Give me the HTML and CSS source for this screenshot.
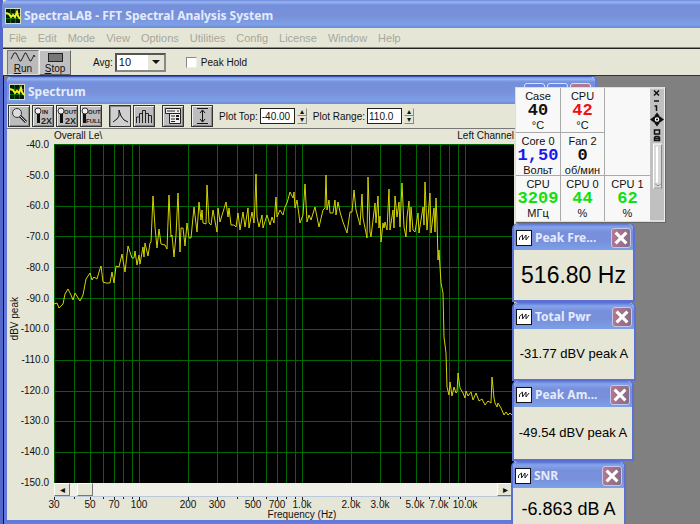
FILE: index.html
```html
<!DOCTYPE html>
<html lang="en">
<head>
<meta charset="utf-8">
<title>SpectraLAB - FFT Spectral Analysis System</title>
<link rel="stylesheet" href="styles.css">
</head>
<body>
<svg class="defs" aria-hidden="true">
  <symbol id="app" viewBox="0 0 16 16"><rect width="16" height="16" fill="#d8d8c8"/><rect x="1" y="1" width="14" height="14" fill="#021c06"/><path d="M5.5 1v14M10.5 1v14M1 5.5h14M1 10.5h14" stroke="#0a6a18"/><path d="M1 5l3 1 2 3 2-2 2 2 2-5 1 4 2 3" fill="none" stroke="#f0f020" stroke-width="2"/></symbol>
  <symbol id="wave" viewBox="0 0 16 16"><rect x=".5" y=".5" width="15" height="15" fill="#fff" stroke="#111"/><path d="M3.500 10V7.500L6.500 5v5l3.500-5v5l3-4" fill="none" stroke="#222"/></symbol>
  <symbol id="cross" viewBox="0 0 20 20"><path d="M4 4l12 12M16 4L4 16" stroke="#fff" stroke-width="3.4"/></symbol>
</svg>
<div class="app">
  <header class="titlebar main-title"><svg class="icon"><use href="#app"/></svg><h1>SpectraLAB - FFT Spectral Analysis System</h1></header>
  <nav class="menu">
    <button>File</button><button>Edit</button><button>Mode</button><button>View</button><button>Options</button><button>Utilities</button><button>Config</button><button>License</button><button>Window</button><button>Help</button>
  </nav>
  <div class="runbar">
    <button class="big pressed"><svg width="26" height="12" viewBox="0 0 26 12"><path d="M1 8l3-6h2l4 8h1l4-8h1l4 8h1l3-6 1 2" fill="none" stroke="#222"/></svg><span><u>R</u>un</span></button>
    <button class="big"><svg width="26" height="12" viewBox="0 0 26 12"><rect x="6.500" y="2.500" width="14" height="8" fill="#777" stroke="#222"/></svg><span><u>S</u>top</span></button>
    <label class="avg" for="avg">Avg:</label>
    <span class="combo"><select id="avg"><option>10</option></select><i></i></span>
    <label class="hold"><input type="checkbox">Peak Hold</label>
  </div>
  <main class="desktop">
    <section class="spectrum">
      <header class="titlebar sub-title"><svg class="icon"><use href="#app"/></svg><h2>Spectrum</h2>
        <span class="caption"><button aria-label="Minimize"></button><button aria-label="Maximize"></button><button class="red" aria-label="Close"></button></span></header>
      <div class="tools">
        <button aria-label="Zoom"><svg viewBox="0 0 20 20"><circle cx="8" cy="7" r="4.500" fill="#ddd" stroke="#333"/><path d="M11 10l6 6" stroke="#222" stroke-width="3"/><path d="M11 10l6 6" stroke="#ccc"/></svg></button>
        <button aria-label="Zoom in 2X"><svg viewBox="0 0 20 20"><circle cx="5" cy="5" r="3" fill="#eee" stroke="#333"/><path d="M5.500 8v9" stroke="#111" stroke-width="3"/><text x="9" y="8">IN</text><text class="x2" x="8" y="18">2X</text></svg></button>
        <button aria-label="Zoom out 2X"><svg viewBox="0 0 20 20"><circle cx="4" cy="5" r="3" fill="#eee" stroke="#333"/><path d="M4.500 8v9" stroke="#111" stroke-width="3"/><text x="7" y="8">OUT</text><text class="x2" x="8" y="18">2X</text></svg></button>
        <button aria-label="Zoom out full"><svg viewBox="0 0 20 20"><circle cx="4" cy="5" r="3" fill="#eee" stroke="#333"/><path d="M3.500 8v9" stroke="#111" stroke-width="3"/><text x="7" y="8">OUT</text><text x="5" y="17">FULL</text></svg></button>
        <button class="pressed gap" aria-label="Line plot"><svg viewBox="0 0 20 20"><path d="M3 16l4-3 2-3V4l2 6 3 4 4 2" fill="none" stroke="#111"/></svg></button>
        <button aria-label="Bar plot"><svg viewBox="0 0 20 20"><path d="M2.500 17v-6h3v6V7.500h3V17V4.500h3V17V7.500h3V17V9.500h3V17" fill="none" stroke="#222"/></svg></button>
        <button class="gap" aria-label="Options"><svg viewBox="0 0 20 20"><path d="M2.500 2.500h15v5h-15zM6.500 7.500h11v10h-11z" fill="#eee" stroke="#222"/><path d="M4 5h8M14 5h2M8 10h4M8 13h4M8 15.500h4" stroke="#222"/><path d="M13 10h3M13 13h3" stroke="#222" stroke-width="2"/></svg></button>
        <button class="gap" aria-label="Scale"><svg viewBox="0 0 20 20"><path d="M5 2.500h11M5 17.500h11M10.500 4v12M8 7l2.500-3L13 7M8 13l2.500 3 2.500-3" fill="none" stroke="#111"/></svg></button>
        <label for="top">Plot Top:</label><input id="top" value="-40.00">
        <span class="spin"><button aria-label="Top up">▴</button><button aria-label="Top down">▾</button></span>
        <label for="range">Plot Range:</label><input id="range" value="110.0">
        <span class="spin"><button aria-label="Range up">▴</button><button aria-label="Range down">▾</button></span>
      </div>
      <div class="chart">
        <div class="legend"><span>Overall Le\</span><span>Left Channel</span></div>
        <div class="unit">dBV peak</div>
        <div class="yaxis"><span>-40.0</span><span>-50.0</span><span>-60.0</span><span>-70.0</span><span>-80.0</span><span>-90.0</span><span>-100.0</span><span>-110.0</span><span>-120.0</span><span>-130.0</span><span>-140.0</span><span>-150.0</span></div>
        <svg class="plot" viewBox="0 0 460 339">
          <rect width="460" height="339"/>
          <path class="grid" d="M.5 0v339M20.500 0v339M36.500 0v339M49.500 0v339M60.500 0v339M69.500 0v339M78.500 0v339M85.500 0v339M134.500 0v339M163.500 0v339M183.500 0v339M199.500 0v339M212.500 0v339M223.500 0v339M232.500 0v339M241.500 0v339M248.500 0v339M297.500 0v339M326.500 0v339M346.500 0v339M362.500 0v339M375.500 0v339M386.500 0v339M395.500 0v339M404.500 0v339M411.500 0v339M0 .5h460M0 31.500h460M0 62.500h460M0 92.500h460M0 123.500h460M0 154.500h460M0 185.500h460M0 216.500h460M0 247.500h460M0 277.500h460M0 308.500h460"/>
          <polyline points="0,160 3,159 5,164 9,160 11,150 14,145 17,151 19,156 21,149 26,157 29,151 32,135 36,129 38,136 40,133 43,135 45,128 47,122 49,138 52,139 56,139 58,128 60,139 62,122 65,123 68,110 71,128 74,102 78,114 80,114 81,107 83,121 85,111 86,120 89,103 90,113 91,99 94,112 96,99 97,98 99,52 101,83 103,104 105,85 107,100 111,101 113,105 115,51 117,93 118,91 120,113 122,91 124,49 126,108 127,84 129,84 131,102 133,79 135,94 137,94 140,63 143,88 145,58 147,76 148,66 149,79 152,80 153,41 155,79 157,81 159,66 163,88 164,64 166,78 169,68 172,58 174,73 175,64 177,81 180,81 182,83 184,69 186,86 189,68 191,83 194,64 195,84 198,68 200,79 201,59 202,30 203,73 205,83 208,71 209,84 213,71 216,81 218,73 220,79 222,53 223,73 226,66 229,71 231,63 233,59 236,48 239,54 240,48 241,64 243,56 246,79 249,71 251,40 253,78 255,71 257,76 261,63 263,73 265,83 269,66 271,64 272,31 273,66 275,56 276,69 279,69 281,56 282,71 284,58 286,68 289,78 293,89 296,68 298,68 300,46 302,66 306,81 308,50 309,74 313,94 314,33 316,88 317,93 321,59 322,79 324,52 325,84 326,72 327,98 329,79 330,84 331,78 333,86 335,45 336,86 339,66 340,84 341,52 343,73 345,58 346,83 348,39 350,83 352,93 353,73 355,57 356,88 357,63 359,86 361,88 364,69 365,89 369,63 370,81 371,38 373,86 374,73 376,49 377,89 380,64 381,88 382,54 383,76 384,116 385,106 387,139 389,149 390,193 392,209 393,243 395,251 396,238 398,252 400,243 402,249 403,248 404,229 406,244 409,249 411,254 412,247 414,252 417,248 419,256 422,249 425,257 428,255 431,261 434,257 437,259 438,233 440,254 441,259 443,263 444,259 447,264 450,271 452,268 454,271 456,269 458,271 460,271"/>
        </svg>
        <div class="scroll"><button aria-label="Scroll left">◂</button><button class="thumb" aria-label="Position"></button><button class="end" aria-label="Scroll right">▸</button></div>
        <svg class="xaxis" viewBox="0 0 476 23">
          <path d="M8.500 0v3M28.500 0v2M44.500 0v3M57.500 0v2M68.500 0v3M77.500 0v2M86.500 0v2M93.500 0v3M142.500 0v3M171.500 0v3M191.500 0v2M207.500 0v3M220.500 0v2M231.500 0v3M240.500 0v2M249.500 0v2M256.500 0v3M305.500 0v3M334.500 0v3M354.500 0v2M370.500 0v3M383.500 0v2M394.500 0v3M403.500 0v2M412.500 0v2M419.500 0v3" stroke="#222"/>
          <g><text x="8" y="11">30</text><text x="44" y="11">50</text><text x="68" y="11">70</text><text x="93" y="11">100</text><text x="142" y="11">200</text><text x="171" y="11">300</text><text x="207" y="11">500</text><text x="231" y="11">700</text><text x="256" y="11">1.0k</text><text x="305" y="11">2.0k</text><text x="334" y="11">3.0k</text><text x="369" y="11">5.0k</text><text x="393" y="11">7.0k</text><text x="419" y="11">10.0k</text><text x="256" y="21">Frequency (Hz)</text></g>
        </svg>
      </div>
    </section>
  </main>
</div>

<aside class="gadget">
  <div class="cells">
    <div>Case<b>40</b>°C</div><div>CPU<b class="hot">42</b>°C</div><div class="empty"></div>
    <div>Core 0<b class="volt">1,50</b>Вольт</div><div>Fan 2<b>0</b>об/мин</div><div class="empty"></div>
    <div>CPU<b class="ok">3209</b>МГц</div><div>CPU 0<b class="ok">44</b>%</div><div>CPU 1<b class="ok">62</b>%</div>
  </div>
  <svg class="strip" viewBox="0 0 14 132"><rect width="14" height="132" fill="#c0c0c0"/>
    <path d="M4 2l5 5M9 2L4 7M4 12.500h5M4.500 17.500h2v5" fill="none" stroke="#111" stroke-width="1.500"/>
    <path d="M7 24l3 4H4zM7 38l3-4H4zM0 31l4-3v6zM14 31l-4-3v6z" fill="#111"/><circle cx="7" cy="31" r="3" fill="#fff" stroke="#111" stroke-width="1.500"/><circle cx="7" cy="31" r="1"/>
    <rect x="4.500" y="41.500" width="5" height="4" fill="none" stroke="#111" stroke-width="1.500"/><path d="M4.500 52v-3l1-1h3l1 1v3zM4.500 50h5" fill="none" stroke="#111" stroke-width="1.500"/>
    <rect x="3.500" y="55.500" width="8" height="44" fill="#d8d8d8" stroke="#fff"/><path d="M7 58v36" stroke="#fff" stroke-width="2"/><path d="M4 99.500h8M11.500 56v44M5 95l2 2h2l2-2" fill="none" stroke="#888"/></svg>
</aside>

<section class="meter peak-freq"><header><svg class="icon"><use href="#wave"/></svg><h2>Peak Fre...</h2><button aria-label="Close"><svg><use href="#cross"/></svg></button></header><output>516.80 Hz</output></section>
<section class="meter total"><header><svg class="icon"><use href="#wave"/></svg><h2>Total Pwr</h2><button aria-label="Close"><svg><use href="#cross"/></svg></button></header><output class="long">-31.77 dBV peak A</output></section>
<section class="meter peak-amp"><header><svg class="icon"><use href="#wave"/></svg><h2>Peak Am...</h2><button aria-label="Close"><svg><use href="#cross"/></svg></button></header><output class="long">-49.54 dBV peak A</output></section>
<section class="meter snr"><header><svg class="icon"><use href="#wave"/></svg><h2>SNR</h2><button aria-label="Close"><svg><use href="#cross"/></svg></button></header><output>-6.863 dB A</output></section>
</body>
</html>
```
FILE: styles.css
```css
* { box-sizing: border-box; }
body {
  margin: 0;
  height: 100vh;
  overflow: hidden;
  position: relative;
  font: 10px/13px "Liberation Sans", Arial, sans-serif;
  color: #111;
}
button, input, select { font: inherit; color: inherit; margin: 0; padding: 0; border-radius: 0; }
h1, h2 { margin: 0; font: bold 12px/18px "Noto Sans", "Open Sans", sans-serif; color: #e4ebfc; white-space: nowrap; }
.defs { position: absolute; width: 0; height: 0; }
.icon { width: 16px; height: 16px; flex: none; }

.app {
  height: 100%;
  display: flex;
  flex-direction: column;
  border-left: 3px solid #5468cc;
  background: #e6e6d6;
}
.titlebar {
  display: flex;
  align-items: center;
  gap: 3px;
  background: linear-gradient(#6a88dc 0, #98b4f0 2px, #7490dc 5px, #7890d8 55%, #7ca0e8 88%, #7088d4);
}
.main-title { height: 28px; padding: 4px 0 0 3px; border-radius: 6px 0 0; margin-left: -1px; }
.sub-title { height: 27px; padding: 2px 0 0 2px; border-radius: 5px 5px 0 0; position: relative; }
.caption { position: absolute; right: 4px; top: 6px; display: flex; gap: 2px; }
.caption button { width: 21px; height: 21px; border: 1px solid #dbe4fa; border-radius: 3px; background: #6b86dc; }
.caption .red { background: #b07890; }

.menu { display: flex; height: 20px; padding-left: 6px; gap: 11px; border-bottom: 1px solid #7686d0; }
.menu button { border: 0; background: none; color: #a6a69b; font-size: 11px; line-height: 18px; }

.runbar {
  display: flex;
  align-items: center;
  height: 28px;
  padding-left: 4px;
  border-top: 1px solid #222;
  border-bottom: 1px solid #333;
}
.big {
  width: 32px;
  height: 25px;
  display: flex;
  flex-direction: column;
  align-items: center;
  line-height: 11px;
  background: #c0c0c0;
  border: 1px solid;
  border-color: #eee #666 #666 #eee;
}
.pressed.big { background: #bbb; border-color: #777 #ddd #ddd #777; }
.avg { margin: 0 2px 0 22px; }
.combo { position: relative; width: 51px; height: 19px; margin-right: 20px; }
.combo select { appearance: none; width: 100%; height: 100%; padding-left: 2px; font-size: 11px; border: 2px solid #555; border-right-color: #888; border-bottom-color: #888; background: #fff; }
.combo i { position: absolute; right: 2px; top: 2px; width: 16px; height: 15px; background: #e6e6d6; pointer-events: none; }
.combo i::after { content: ""; position: absolute; left: 4px; top: 5px; border: 4px solid transparent; border-top-color: #111; border-bottom: 0; }
.hold { display: flex; align-items: center; gap: 4px; }
.hold input { appearance: none; width: 11px; height: 11px; background: #fff; border: 1px solid; border-color: #888 #eee #eee #888; }

.desktop { flex: 1; min-height: 0; background: #808080; border-left: 1px solid #111; }
.spectrum {
  width: 594px;
  background: #e6e6d6;
  border: 3px solid #6079da;
  border-top: 1px solid #3a56b0;
  border-radius: 6px 6px 0 0;
}
.tools { display: flex; align-items: center; height: 25px; padding-left: 1px; gap: 2px; border-bottom: 1px solid #777; }
.tools > button { width: 22px; height: 22px; flex: none; background: #bdbdbd; border: 1px solid #333; box-shadow: inset 1px 1px #eee, inset -1px -1px #888; }
.tools > .pressed { background: #cfcfcf; box-shadow: inset 1px 1px #888; }
.tools > button > svg { display: block; width: 20px; height: 20px; }
.tools svg text { font: bold 6px "Liberation Sans", sans-serif; fill: #222; }
.tools svg .x2 { font-size: 9px; }
.tools > .gap { margin-left: 5px; }
.tools label { margin-left: 4px; white-space: nowrap; }
.tools input { width: 35px; height: 16px; padding-left: 1px; border: 1px solid #222; background: #fff; }
.spin { display: flex; flex-direction: column; }
.spin button { width: 10px; height: 8px; font-size: 8px; line-height: 6px; border: 1px solid; border-color: #e6e6d6 #888 #888 #e6e6d6; background: #e6e6d6; }

.chart {
  display: grid;
  grid-template-columns: 15px 32px 460px;
  grid-template-rows: 15px 339px 14px 23px;
}
.legend { grid-column: 3; display: flex; justify-content: space-between; line-height: 14px; }
.unit { grid-column: 1; grid-row: 2; writing-mode: vertical-rl; transform: rotate(180deg); align-self: center; padding-bottom: 10px; line-height: 15px; }
.yaxis {
  grid-column: 2;
  grid-row: 2;
  display: flex;
  flex-direction: column;
  justify-content: space-between;
  margin: -6px 0;
  padding-right: 5px;
  white-space: nowrap;
}
.yaxis span { display: flex; justify-content: flex-end; }
.plot { grid-column: 3; grid-row: 2; display: block; width: 100%; }
.plot .grid { stroke: #006800; shape-rendering: crispEdges; }
.plot polyline { fill: none; stroke: #d4d400; stroke-width: 1; }
.scroll { grid-column: 3; display: flex; background: #f1f0e8; border-bottom: 1px solid #bcc8dc; }
.scroll button { width: 16px; line-height: 10px; background: #e6e6d6; border: 1px solid; border-color: #fff #777 #777 #fff; }
.scroll .thumb { margin-left: 7px; }
.scroll .end { margin-left: auto; margin-right: 1px; }
.xaxis { grid-column: 3; width: 476px; height: 23px; margin-left: -8px; }
.xaxis text { font: 10px "Liberation Sans", sans-serif; text-anchor: middle; fill: #111; }

.gadget {
  position: absolute;
  left: 515px;
  top: 87px;
  width: 150px;
  display: flex;
  background: #f8f8f8;
  border: 1px solid #ddd;
  border-right-color: #eee;
  box-shadow: 1px 1px #666;
}
.cells { flex: 1; display: grid; grid-template-columns: 45px 44px 1fr; grid-template-rows: 45px 43px 45px; font-size: 11px; line-height: 12px; }
.cells div { display: flex; flex-direction: column; align-items: center; padding-top: 2px; border-right: 1px solid #aaa; border-bottom: 1px solid #aaa; white-space: nowrap; }
.cells div:nth-child(3n) { border-right: 0; }
.cells div:nth-child(n+7), .cells div:nth-child(3) { border-bottom: 0; }
.cells b { font: bold 17px/17px "Liberation Mono", monospace; }
.hot { color: #f01010; }
.volt { color: #1818f0; }
.ok { color: #10e010; }
.strip { width: 14px; height: 133px; flex: none; }

.meter {
  position: absolute;
  left: 512px;
  width: 123px;
  background: #e6e6d6;
  border: 2px solid #5a70d4;
  border-top-width: 1px;
  border-radius: 6px 6px 0 0;
}
.meter header {
  display: flex;
  align-items: center;
  gap: 3px;
  height: 26px;
  padding: 1px 2px 0;
  border-radius: 5px 5px 0 0;
  background: linear-gradient(#5c78d4, #86a4ec 3px, #7890dc 8px, #7890dc 65%, #7ca0e8);
}
.meter h2 { flex: 1; }
.meter header button { width: 20px; height: 20px; border: 1px solid #c8c8e4; border-radius: 3px; background: linear-gradient(100deg, #b87890, #846c88); }
.meter header button svg { display: block; width: 18px; height: 18px; }
.meter output { display: flex; align-items: center; justify-content: center; height: 50px; font-size: 23px; line-height: 32px; white-space: nowrap; color: #000; }
.meter .long { font-size: 13px; }
.peak-freq { top: 223px; }
.total { top: 302px; width: 124px; }
.peak-amp { top: 380px; width: 122px; }
.peak-amp output { height: 52px; }
.snr { top: 461px; left: 511px; width: 115px; }
.snr output { font-size: 18px; height: 42px; }
```
